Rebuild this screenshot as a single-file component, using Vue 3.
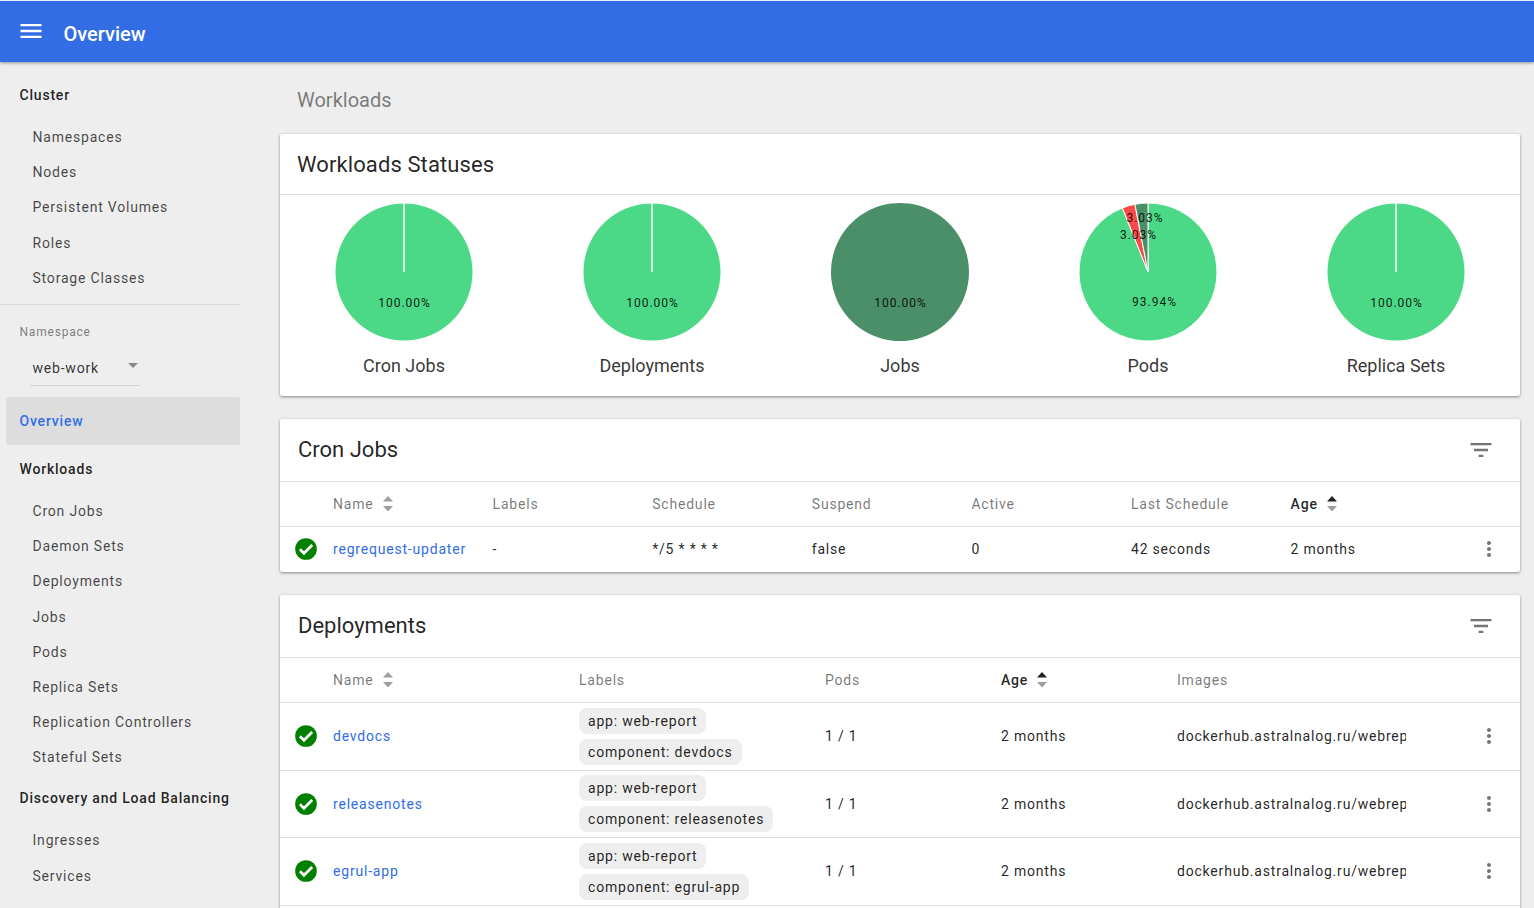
<script setup>
const clusterItems = ['Namespaces', 'Nodes', 'Persistent Volumes', 'Roles', 'Storage Classes']
const workloadItems = ['Cron Jobs', 'Daemon Sets', 'Deployments', 'Jobs', 'Pods', 'Replica Sets', 'Replication Controllers', 'Stateful Sets']
const discoveryItems = ['Ingresses', 'Services']

const GREEN = '#4cd987'
const DARK = '#4b8f69'
const RED = '#ff4a4a'
const R = 69
const C = 70

function point(frac) {
  const a = frac * 2 * Math.PI
  return `${(C + R * Math.sin(a)).toFixed(2)} ${(C - R * Math.cos(a)).toFixed(2)}`
}
function slice(from, to) {
  const span = to - from
  if (span >= 0.9999) {
    return `M${C} ${C} L${C} ${C - R} A${R} ${R} 0 1 1 ${C - 0.01} ${C - R} Z`
  }
  return `M${C} ${C} L${point(from)} A${R} ${R} 0 ${span > 0.5 ? 1 : 0} 1 ${point(to)} Z`
}
function full(color, text, stroke = '#fff') {
  return { slices: [{ d: slice(0, 1), color, stroke }], texts: [{ x: C + 0.5, y: 105, t: text }] }
}
const pies = [
  { name: 'Cron Jobs', ...full(GREEN, '100.00%') },
  { name: 'Deployments', ...full(GREEN, '100.00%') },
  { name: 'Jobs', ...full(DARK, '100.00%', 'none') },
  {
    name: 'Pods',
    slices: [
      { d: slice(0, 0.9394), color: GREEN, stroke: '#fff' },
      { d: slice(0.9394, 0.9697), color: RED, stroke: '#fff' },
      { d: slice(0.9697, 1), color: DARK, stroke: '#fff' }
    ],
    texts: [
      { x: 76.5, y: 104, t: '93.94%' },
      { x: 67, y: 20, t: '3.03%' },
      { x: 60.5, y: 37, t: '3.03%' }
    ]
  },
  { name: 'Replica Sets', ...full(GREEN, '100.00%') }
]

const cronHead = [
  { t: 'Name', sort: 'none' }, { t: 'Labels' }, { t: 'Schedule' }, { t: 'Suspend' },
  { t: 'Active' }, { t: 'Last Schedule' }, { t: 'Age', sort: 'active' }
]
const cronRow = ['-', '*/5 * * * *', 'false', '0', '42 seconds', '2 months']

const depHead = [
  { t: 'Name', sort: 'none' }, { t: 'Labels' }, { t: 'Pods' }, { t: 'Age', sort: 'active' }, { t: 'Images' }
]
const deployments = [
  { name: 'devdocs', comp: 'component: devdocs' },
  { name: 'releasenotes', comp: 'component: releasenotes' },
  { name: 'egrul-app', comp: 'component: egrul-app' }
]
</script>

<template>
  <div class="app">
    <header class="toolbar">
      <svg class="burger" viewBox="0 0 24 24" width="28" height="28"><path fill="#fff" d="M3 18h18v-2H3v2zm0-5h18v-2H3v2zm0-7v2h18V6H3z"/></svg>
      <span class="toolbar-title">Overview</span>
    </header>

    <div class="body">
      <nav class="sidebar">
        <div class="nav-head">Cluster</div>
        <div v-for="i in clusterItems" :key="i" class="nav-item">{{ i }}</div>
        <div class="nav-divider"></div>
        <div class="ns-label">Namespace</div>
        <div class="ns-select">
          <span>web-work</span>
          <i class="ns-caret"></i>
        </div>
        <div class="nav-active">Overview</div>
        <div class="nav-head">Workloads</div>
        <div v-for="i in workloadItems" :key="i" class="nav-item">{{ i }}</div>
        <div class="nav-head">Discovery and Load Balancing</div>
        <div v-for="i in discoveryItems" :key="i" class="nav-item">{{ i }}</div>
      </nav>

      <main class="main">
        <div class="crumb">Workloads</div>

        <section class="card">
          <h2 class="status-title">Workloads Statuses</h2>
          <div class="pies">
            <div v-for="p in pies" :key="p.name" class="pie">
              <svg width="140" height="140" viewBox="0 0 140 140">
                <path v-for="(s, n) in p.slices" :key="n" :d="s.d" :fill="s.color" :stroke="s.stroke" stroke-width="1" />
                <text v-for="(t, n) in p.texts" :key="'t' + n" :x="t.x" :y="t.y" class="pie-text">{{ t.t }}</text>
              </svg>
              <div class="pie-name">{{ p.name }}</div>
            </div>
          </div>
        </section>

        <section class="card">
          <div class="card-head">
            <h2 class="card-title">Cron Jobs</h2>
            <svg class="filter" viewBox="0 0 24 24" width="28" height="28"><path fill="#757575" d="M10 18h4v-2h-4v2zM3 6v2h18V6H3zm3 7h12v-2H6v2z"/></svg>
          </div>
          <div class="row head cron">
            <span></span>
            <span v-for="h in cronHead" :key="h.t" class="th" :class="{ on: h.sort === 'active' }">
              {{ h.t }}
              <svg v-if="h.sort" class="sort" width="12" height="16" viewBox="0 0 12 16">
                <path d="M6 0l5 5.5H1z" :fill="h.sort === 'active' ? '#212121' : '#9e9e9e'" />
                <path d="M6 15.5l5-5.5H1z" fill="#9e9e9e" />
              </svg>
            </span>
          </div>
          <div class="row cron last">
            <svg class="ok" viewBox="0 0 24 24" width="26" height="26"><circle cx="12" cy="12" r="10" fill="#008000"/><path d="M6.4 12.2l3.7 3.7 7.6-7.6" fill="none" stroke="#fff" stroke-width="2.5"/></svg>
            <a class="link">regrequest-updater</a>
            <span v-for="(c, n) in cronRow" :key="n">{{ c }}</span>
            <svg class="more" viewBox="0 0 24 24" width="24" height="24"><path fill="#757575" d="M12 8c1.1 0 2-.9 2-2s-.9-2-2-2-2 .9-2 2 .9 2 2 2zm0 2c-1.1 0-2 .9-2 2s.9 2 2 2 2-.9 2-2-.9-2-2-2zm0 6c-1.1 0-2 .9-2 2s.9 2 2 2 2-.9 2-2-.9-2-2-2z"/></svg>
          </div>
        </section>

        <section class="card">
          <div class="card-head">
            <h2 class="card-title">Deployments</h2>
            <svg class="filter" viewBox="0 0 24 24" width="28" height="28"><path fill="#757575" d="M10 18h4v-2h-4v2zM3 6v2h18V6H3zm3 7h12v-2H6v2z"/></svg>
          </div>
          <div class="row head dep">
            <span></span>
            <span v-for="h in depHead" :key="h.t" class="th" :class="{ on: h.sort === 'active' }">
              {{ h.t }}
              <svg v-if="h.sort" class="sort" width="12" height="16" viewBox="0 0 12 16">
                <path d="M6 0l5 5.5H1z" :fill="h.sort === 'active' ? '#212121' : '#9e9e9e'" />
                <path d="M6 15.5l5-5.5H1z" fill="#9e9e9e" />
              </svg>
            </span>
          </div>
          <div v-for="d in deployments" :key="d.name" class="row dep tall">
            <svg class="ok" viewBox="0 0 24 24" width="26" height="26"><circle cx="12" cy="12" r="10" fill="#008000"/><path d="M6.4 12.2l3.7 3.7 7.6-7.6" fill="none" stroke="#fff" stroke-width="2.5"/></svg>
            <a class="link">{{ d.name }}</a>
            <div class="chips">
              <span class="chip">app: web-report</span>
              <span class="chip">{{ d.comp }}</span>
            </div>
            <span>1 / 1</span>
            <span>2 months</span>
            <span class="image">dockerhub.astralnalog.ru/webreport</span>
            <svg class="more" viewBox="0 0 24 24" width="24" height="24"><path fill="#757575" d="M12 8c1.1 0 2-.9 2-2s-.9-2-2-2-2 .9-2 2 .9 2 2 2zm0 2c-1.1 0-2 .9-2 2s.9 2 2 2 2-.9 2-2-.9-2-2-2zm0 6c-1.1 0-2 .9-2 2s.9 2 2 2 2-.9 2-2-.9-2-2-2z"/></svg>
          </div>
          <div class="tail"></div>
        </section>
      </main>
    </div>
  </div>
</template>

<style>
html, body { margin: 0; height: 100%; overflow: hidden; background: #eeeeee; }
</style>

<style scoped>
.app {
  height: 908px;
  display: flex;
  flex-direction: column;
  overflow: hidden;
  font-family: Roboto, "Liberation Sans", sans-serif;
  font-size: 14px;
  letter-spacing: 0.8px;
  color: rgba(0, 0, 0, 0.87);
  background: #eeeeee;
}
.toolbar {
  position: relative;
  z-index: 2;
  flex: 0 0 62px;
  box-sizing: border-box;
  border-top: 1px solid #e9effc;
  display: flex;
  align-items: center;
  background: #326de6;
  box-shadow: 0 1px 3px rgba(0, 0, 0, 0.4);
  padding-left: 16.5px;
}
.burger { margin-top: -2px; }
.toolbar-title {
  margin-left: 19px;
  margin-top: 4px;
  color: #fff;
  font-size: 20px;
  font-weight: 500;
  letter-spacing: 0;
}
.body { flex: 1; display: flex; min-height: 0; }
.sidebar { flex: 0 0 240px; padding-top: 9px; box-sizing: border-box; }
.nav-head {
  height: 48px;
  line-height: 48px;
  padding-left: 19.5px;
  font-weight: 500;
}
.nav-item {
  height: 35.2px;
  line-height: 37px;
  padding-left: 32.5px;
  color: rgba(0, 0, 0, 0.72);
}
.nav-divider { height: 1px; margin-top: 9px; background: #d9d9d9; }
.ns-label {
  margin-top: 20px;
  padding-left: 19.5px;
  line-height: 14px;
  font-size: 12px;
  color: rgba(0, 0, 0, 0.5);
}
.ns-select {
  margin: 15px 0 0 30px;
  width: 110px;
  height: 32px;
  box-sizing: border-box;
  border-bottom: 1px solid #d3d3d3;
  padding-left: 2.5px;
  line-height: 28px;
  position: relative;
  color: rgba(0, 0, 0, 0.8);
}
.ns-caret {
  position: absolute;
  right: 2px;
  top: 9px;
  border: 5px solid transparent;
  border-top-color: #8a8a8a;
  border-bottom: 0;
}
.nav-active {
  margin: 11px 0 0 6px;
  height: 48px;
  line-height: 48px;
  padding-left: 13.5px;
  border-radius: 2px;
  background: #dddddd;
  color: #326de6;
  font-weight: 500;
}
.main {
  flex: 1;
  min-width: 0;
  padding: 0 14px 0 40px;
  overflow: hidden;
}
.crumb {
  height: 72px;
  line-height: 76px;
  padding-left: 17px;
  font-size: 20px;
  letter-spacing: 0;
  color: rgba(0, 0, 0, 0.5);
}
.card {
  background: #fff;
  border-radius: 2px;
  box-shadow: 0 1px 3px rgba(0, 0, 0, 0.45);
  margin-bottom: 23px;
}
.status-title {
  margin: 0;
  height: 61px;
  box-sizing: border-box;
  border-bottom: 1px solid #e0e0e0;
  line-height: 62px;
  padding-left: 17px;
  font-size: 22px;
  font-weight: 400;
  letter-spacing: 0.1px;
}
.pies { display: grid; grid-template-columns: repeat(5, 1fr); height: 201px; }
.pie { display: flex; flex-direction: column; align-items: center; padding-top: 7px; }
.pie svg { display: block; }
.pie-text { font-size: 12px; text-anchor: middle; fill: rgba(0, 0, 0, 0.87); letter-spacing: 1px; }
.pie-name {
  margin-top: 4px;
  font-size: 18px;
  line-height: 40px;
  letter-spacing: 0;
  color: rgba(0, 0, 0, 0.8);
}
.card-head {
  height: 62px;
  display: flex;
  align-items: center;
  justify-content: space-between;
  padding: 0 25.5px 0 18px;
}
.card-title { margin: -2px 0 0; font-size: 22px; font-weight: 400; letter-spacing: 0; }
.filter { display: block; }
.row {
  display: grid;
  align-items: center;
  box-sizing: border-box;
  border-top: 1px solid #e0e0e0;
  height: 45px;
  white-space: nowrap;
}
.row.last { height: 46px; padding-bottom: 1px; }
.cron { grid-template-columns: 53px repeat(7, 159.6px) 1fr; }
.dep { grid-template-columns: 53px 246px 246px 176px 176px 229px 1fr; }
.row.tall { height: 67.5px; }
.head { color: rgba(0, 0, 0, 0.54); }
.th { display: inline-flex; align-items: center; gap: 8px; }
.th.on { color: rgba(0, 0, 0, 0.87); font-weight: 500; }
.sort { display: block; }
.ok { justify-self: center; margin-left: -1px; }
.link { color: #326de6; }
.chips { display: flex; flex-direction: column; align-items: flex-start; gap: 5px; }
.chip {
  height: 26px;
  line-height: 26px;
  padding: 0 9px;
  border-radius: 8px;
  background: #eeeeee;
}
.image { overflow: hidden; }
.more { justify-self: end; margin-right: 19px; display: block; }
.tail { height: 40px; border-top: 1px solid #e0e0e0; }
</style>
